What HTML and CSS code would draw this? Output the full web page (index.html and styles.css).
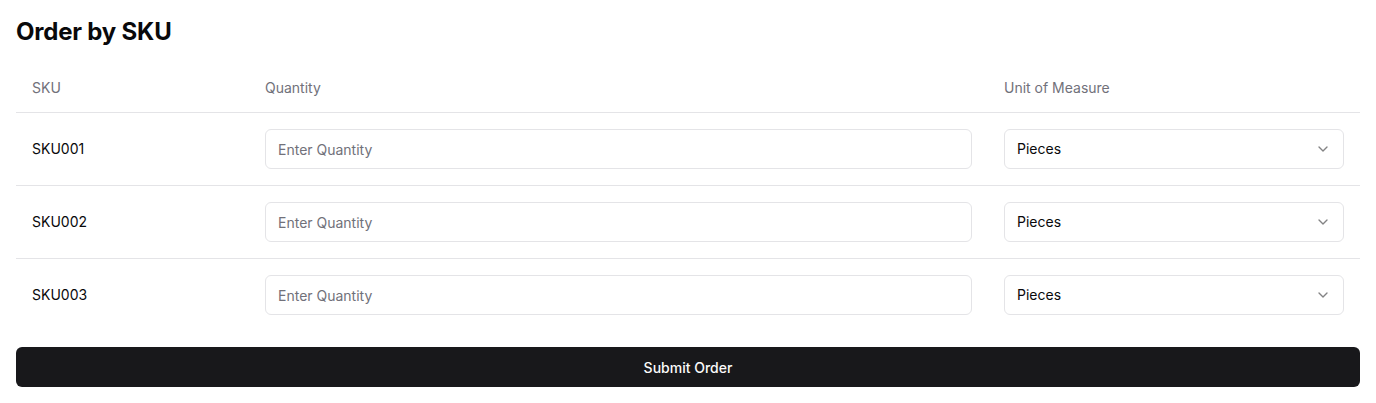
FILE: index.html
```html
<!DOCTYPE html>
<html>
<head>
<meta charset="utf-8">
<link rel="stylesheet" href="styles.css">
</head>
<body>
<div class="page">
  <h1 class="title">Order by SKU</h1>
  <div class="table">
    <div class="row head">
      <div class="cell">SKU</div>
      <div class="cell">Quantity</div>
      <div class="cell">Unit of Measure</div>
    </div>
    <div class="row">
      <div class="cell">SKU001</div>
      <div class="cell"><input class="input" placeholder="Enter Quantity"></div>
      <div class="cell"><div class="select"><span>Pieces</span><svg class="chev" width="16" height="16" viewBox="0 0 24 24" fill="none" stroke="currentColor" stroke-width="2" stroke-linecap="round" stroke-linejoin="round"><path d="m6 9 6 6 6-6"/></svg></div></div>
    </div>
    <div class="row">
      <div class="cell">SKU002</div>
      <div class="cell"><input class="input" placeholder="Enter Quantity"></div>
      <div class="cell"><div class="select"><span>Pieces</span><svg class="chev" width="16" height="16" viewBox="0 0 24 24" fill="none" stroke="currentColor" stroke-width="2" stroke-linecap="round" stroke-linejoin="round"><path d="m6 9 6 6 6-6"/></svg></div></div>
    </div>
    <div class="row last">
      <div class="cell">SKU003</div>
      <div class="cell"><input class="input" placeholder="Enter Quantity"></div>
      <div class="cell"><div class="select"><span>Pieces</span><svg class="chev" width="16" height="16" viewBox="0 0 24 24" fill="none" stroke="currentColor" stroke-width="2" stroke-linecap="round" stroke-linejoin="round"><path d="m6 9 6 6 6-6"/></svg></div></div>
    </div>
  </div>
  <button class="btn">Submit Order</button>
</div>
</body>
</html>
```

FILE: styles.css
```css
* { box-sizing: border-box; }
body {
  margin: 0;
  font-family: Inter, "Noto Sans", sans-serif;
  color: #09090b;
  background: #fff;
}
.page {
  padding: 16px;
}
.title {
  margin: 0 0 16px 0;
  font-size: 24px;
  line-height: 32px;
  font-weight: 700;
  letter-spacing: -0.2px;
}
.table {
  display: flex;
  flex-direction: column;
  font-size: 14px;
  line-height: 20px;
}
.row {
  display: grid;
  grid-template-columns: 233px 739px 1fr;
  align-items: center;
  border-bottom: 1px solid #e4e4e7;
  min-height: 73px;
}
.row.head {
  min-height: 49px;
  color: #71717a;
}
.row.last { border-bottom: none; min-height: 72px; }
.cell {
  padding: 0 16px;
}
.row:not(.head) .cell { padding-top: 16px; padding-bottom: 16px; }
.input {
  width: 100%;
  height: 40px;
  border: 1px solid #e4e4e7;
  border-radius: 6px;
  padding: 0 12px;
  font-family: inherit;
  font-size: 14px;
  color: #09090b;
  background: #fff;
  outline: none;
}
.input::placeholder { color: #71717a; }
.select {
  height: 40px;
  border: 1px solid #e4e4e7;
  border-radius: 6px;
  padding: 0 12px;
  display: flex;
  align-items: center;
  justify-content: space-between;
}
.chev { opacity: 0.5; }
.btn {
  margin-top: 16px;
  width: 100%;
  height: 40px;
  border: none;
  border-radius: 6px;
  background: #18181b;
  color: #fafafa;
  font-family: inherit;
  font-size: 14px;
  font-weight: 500;
}
```
